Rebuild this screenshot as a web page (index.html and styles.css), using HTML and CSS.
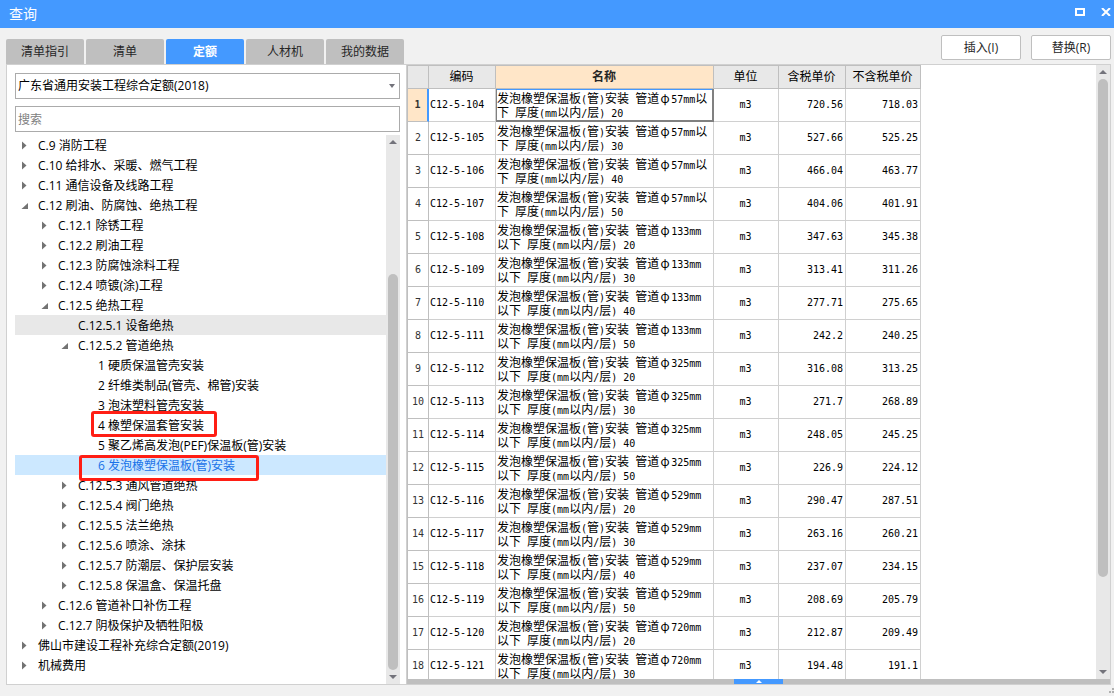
FILE: index.html
```html
<!DOCTYPE html>
<html lang="zh-CN">
<head>
<meta charset="utf-8">
<title>查询</title>
<link rel="stylesheet" href="styles.css">
</head>
<body>
<svg class="defs" aria-hidden="true">
  <symbol id="closed" viewBox="0 0 18 20"><path d="M2 6.5L6.5 10.5L2 14.5Z" fill="#737373"/></symbol>
  <symbol id="open" viewBox="0 0 18 20"><path d="M8 8V14H1.5Z" fill="#737373"/></symbol>
  <symbol id="up" viewBox="0 0 14 14"><path d="M3 9L7 5L11 9Z" fill="#73737b"/></symbol>
  <symbol id="down" viewBox="0 0 14 14"><path d="M3 5H11L7 9Z" fill="#73737b"/></symbol>
</svg>
<header class="titlebar">
  <h1>查询</h1>
  <button type="button" aria-label="最大化"><svg width="10" height="8"><path d="M1 0V8M9 0V8" stroke="#fff" stroke-width="2"/><path d="M0 1H10M0 7H10" stroke="#fff" stroke-width="2"/></svg></button>
  <button type="button" aria-label="关闭"><svg width="10" height="8"><path d="M1 0L9 8M9 0L1 8" stroke="#fff" stroke-width="2"/></svg></button>
</header>
<div class="toolbar">
  <nav class="tabs">
    <button type="button">清单指引</button>
    <button type="button">清单</button>
    <button type="button" class="active">定额</button>
    <button type="button">人材机</button>
    <button type="button">我的数据</button>
  </nav>
  <div class="actions">
    <button type="button">插入(I)</button>
    <button type="button">替换(R)</button>
  </div>
</div>
<main class="content">
  <section class="side">
    <div class="combo">
      <select aria-label="定额库"><option>广东省通用安装工程综合定额(2018)</option></select>
      <svg width="6" height="4"><path d="M0 0H6L3 4Z" fill="#73737b"/></svg>
    </div>
    <input class="search" type="text" placeholder="搜索" aria-label="搜索">
    <div class="treewrap">
      <ul class="tree">
        <li class="l0"><svg><use href="#closed"/></svg>C.9 消防工程</li>
        <li class="l0"><svg><use href="#closed"/></svg>C.10 给排水、采暖、燃气工程</li>
        <li class="l0"><svg><use href="#closed"/></svg>C.11 通信设备及线路工程</li>
        <li class="l0"><svg><use href="#open"/></svg>C.12 刷油、防腐蚀、绝热工程</li>
        <li class="l1"><svg><use href="#closed"/></svg>C.12.1 除锈工程</li>
        <li class="l1"><svg><use href="#closed"/></svg>C.12.2 刷油工程</li>
        <li class="l1"><svg><use href="#closed"/></svg>C.12.3 防腐蚀涂料工程</li>
        <li class="l1"><svg><use href="#closed"/></svg>C.12.4 喷镀(涂)工程</li>
        <li class="l1"><svg><use href="#open"/></svg>C.12.5 绝热工程</li>
        <li class="l2 hover"><svg></svg>C.12.5.1 设备绝热</li>
        <li class="l2"><svg><use href="#open"/></svg>C.12.5.2 管道绝热</li>
        <li class="l3"><svg></svg>1 硬质保温管壳安装</li>
        <li class="l3"><svg></svg>2 纤维类制品(管壳、棉管)安装</li>
        <li class="l3"><svg></svg>3 泡沫塑料管壳安装</li>
        <li class="l3"><svg></svg>4 橡塑保温套管安装<span class="mark mark-a"></span></li>
        <li class="l3"><svg></svg>5 聚乙烯高发泡(PEF)保温板(管)安装</li>
        <li class="l3 selected"><svg></svg>6 发泡橡塑保温板(管)安装<span class="mark mark-b"></span></li>
        <li class="l2"><svg><use href="#closed"/></svg>C.12.5.3 通风管道绝热</li>
        <li class="l2"><svg><use href="#closed"/></svg>C.12.5.4 阀门绝热</li>
        <li class="l2"><svg><use href="#closed"/></svg>C.12.5.5 法兰绝热</li>
        <li class="l2"><svg><use href="#closed"/></svg>C.12.5.6 喷涂、涂抹</li>
        <li class="l2"><svg><use href="#closed"/></svg>C.12.5.7 防潮层、保护层安装</li>
        <li class="l2"><svg><use href="#closed"/></svg>C.12.5.8 保温盒、保温托盘</li>
        <li class="l1"><svg><use href="#closed"/></svg>C.12.6 管道补口补伤工程</li>
        <li class="l1"><svg><use href="#closed"/></svg>C.12.7 阴极保护及牺牲阳极</li>
        <li class="l0"><svg><use href="#closed"/></svg>佛山市建设工程补充综合定额(2019)</li>
        <li class="l0"><svg><use href="#closed"/></svg>机械费用</li>
      </ul>
      <div class="scrollbar side-scroll"><svg><use href="#up"/></svg><div class="track"><div class="thumb"></div></div><svg><use href="#down"/></svg></div>
    </div>
  </section>
  <section class="grid">
    <div class="gridwrap">
      <div class="tablebox">
        <table>
          <colgroup><col class="c-no"><col class="c-code"><col class="c-name"><col class="c-unit"><col class="c-tax"><col class="c-net"></colgroup>
          <thead><tr><th></th><th>编码</th><th class="current">名称</th><th>单位</th><th>含税单价</th><th>不含税单价</th></tr></thead>
          <tbody>
            <tr class="current"><th>1</th><td>C12-5-104</td><td class="name">发泡橡塑保温板<i>(</i>管<i>)</i>安装<i> </i>管道<b>φ</b><i>57mm</i>以下<i> </i>厚度<i>(mm</i>以内<i>/</i>层<i>) 20</i></td><td>m3</td><td>720.56</td><td>718.03</td></tr>
            <tr><th>2</th><td>C12-5-105</td><td class="name">发泡橡塑保温板<i>(</i>管<i>)</i>安装<i> </i>管道<b>φ</b><i>57mm</i>以下<i> </i>厚度<i>(mm</i>以内<i>/</i>层<i>) 30</i></td><td>m3</td><td>527.66</td><td>525.25</td></tr>
            <tr><th>3</th><td>C12-5-106</td><td class="name">发泡橡塑保温板<i>(</i>管<i>)</i>安装<i> </i>管道<b>φ</b><i>57mm</i>以下<i> </i>厚度<i>(mm</i>以内<i>/</i>层<i>) 40</i></td><td>m3</td><td>466.04</td><td>463.77</td></tr>
            <tr><th>4</th><td>C12-5-107</td><td class="name">发泡橡塑保温板<i>(</i>管<i>)</i>安装<i> </i>管道<b>φ</b><i>57mm</i>以下<i> </i>厚度<i>(mm</i>以内<i>/</i>层<i>) 50</i></td><td>m3</td><td>404.06</td><td>401.91</td></tr>
            <tr><th>5</th><td>C12-5-108</td><td class="name">发泡橡塑保温板<i>(</i>管<i>)</i>安装<i> </i>管道<b>φ</b><i>133mm</i>以下<i> </i>厚度<i>(mm</i>以内<i>/</i>层<i>) 20</i></td><td>m3</td><td>347.63</td><td>345.38</td></tr>
            <tr><th>6</th><td>C12-5-109</td><td class="name">发泡橡塑保温板<i>(</i>管<i>)</i>安装<i> </i>管道<b>φ</b><i>133mm</i>以下<i> </i>厚度<i>(mm</i>以内<i>/</i>层<i>) 30</i></td><td>m3</td><td>313.41</td><td>311.26</td></tr>
            <tr><th>7</th><td>C12-5-110</td><td class="name">发泡橡塑保温板<i>(</i>管<i>)</i>安装<i> </i>管道<b>φ</b><i>133mm</i>以下<i> </i>厚度<i>(mm</i>以内<i>/</i>层<i>) 40</i></td><td>m3</td><td>277.71</td><td>275.65</td></tr>
            <tr><th>8</th><td>C12-5-111</td><td class="name">发泡橡塑保温板<i>(</i>管<i>)</i>安装<i> </i>管道<b>φ</b><i>133mm</i>以下<i> </i>厚度<i>(mm</i>以内<i>/</i>层<i>) 50</i></td><td>m3</td><td>242.2</td><td>240.25</td></tr>
            <tr><th>9</th><td>C12-5-112</td><td class="name">发泡橡塑保温板<i>(</i>管<i>)</i>安装<i> </i>管道<b>φ</b><i>325mm</i>以下<i> </i>厚度<i>(mm</i>以内<i>/</i>层<i>) 20</i></td><td>m3</td><td>316.08</td><td>313.25</td></tr>
            <tr><th>10</th><td>C12-5-113</td><td class="name">发泡橡塑保温板<i>(</i>管<i>)</i>安装<i> </i>管道<b>φ</b><i>325mm</i>以下<i> </i>厚度<i>(mm</i>以内<i>/</i>层<i>) 30</i></td><td>m3</td><td>271.7</td><td>268.89</td></tr>
            <tr><th>11</th><td>C12-5-114</td><td class="name">发泡橡塑保温板<i>(</i>管<i>)</i>安装<i> </i>管道<b>φ</b><i>325mm</i>以下<i> </i>厚度<i>(mm</i>以内<i>/</i>层<i>) 40</i></td><td>m3</td><td>248.05</td><td>245.25</td></tr>
            <tr><th>12</th><td>C12-5-115</td><td class="name">发泡橡塑保温板<i>(</i>管<i>)</i>安装<i> </i>管道<b>φ</b><i>325mm</i>以下<i> </i>厚度<i>(mm</i>以内<i>/</i>层<i>) 50</i></td><td>m3</td><td>226.9</td><td>224.12</td></tr>
            <tr><th>13</th><td>C12-5-116</td><td class="name">发泡橡塑保温板<i>(</i>管<i>)</i>安装<i> </i>管道<b>φ</b><i>529mm</i>以下<i> </i>厚度<i>(mm</i>以内<i>/</i>层<i>) 20</i></td><td>m3</td><td>290.47</td><td>287.51</td></tr>
            <tr><th>14</th><td>C12-5-117</td><td class="name">发泡橡塑保温板<i>(</i>管<i>)</i>安装<i> </i>管道<b>φ</b><i>529mm</i>以下<i> </i>厚度<i>(mm</i>以内<i>/</i>层<i>) 30</i></td><td>m3</td><td>263.16</td><td>260.21</td></tr>
            <tr><th>15</th><td>C12-5-118</td><td class="name">发泡橡塑保温板<i>(</i>管<i>)</i>安装<i> </i>管道<b>φ</b><i>529mm</i>以下<i> </i>厚度<i>(mm</i>以内<i>/</i>层<i>) 40</i></td><td>m3</td><td>237.07</td><td>234.15</td></tr>
            <tr><th>16</th><td>C12-5-119</td><td class="name">发泡橡塑保温板<i>(</i>管<i>)</i>安装<i> </i>管道<b>φ</b><i>529mm</i>以下<i> </i>厚度<i>(mm</i>以内<i>/</i>层<i>) 50</i></td><td>m3</td><td>208.69</td><td>205.79</td></tr>
            <tr><th>17</th><td>C12-5-120</td><td class="name">发泡橡塑保温板<i>(</i>管<i>)</i>安装<i> </i>管道<b>φ</b><i>720mm</i>以下<i> </i>厚度<i>(mm</i>以内<i>/</i>层<i>) 20</i></td><td>m3</td><td>212.87</td><td>209.49</td></tr>
            <tr><th>18</th><td>C12-5-121</td><td class="name">发泡橡塑保温板<i>(</i>管<i>)</i>安装<i> </i>管道<b>φ</b><i>720mm</i>以下<i> </i>厚度<i>(mm</i>以内<i>/</i>层<i>) 30</i></td><td>m3</td><td>194.48</td><td>191.1</td></tr>
          </tbody>
        </table>
      </div>
      <div class="scrollbar grid-scroll"><svg><use href="#up"/></svg><div class="track"><div class="thumb"></div></div><svg><use href="#down"/></svg></div>
    </div>
    <div class="splitter"><button type="button" aria-label="展开"><svg width="6" height="3"><path d="M0 3L3 0L6 3Z" fill="#fff"/></svg></button></div>
  </section>
</main>
<footer class="status"><svg width="5" height="5"><path d="M3 0H5V2H3ZM0 3H2V5H0ZM3 3H5V5H3Z" fill="#b0b0b0"/></svg></footer>
</body>
</html>
```
FILE: styles.css
```css
* { box-sizing: border-box; }
body {
  margin: 0;
  height: 100vh;
  display: flex;
  flex-direction: column;
  overflow: hidden;
  background: #f1f1f1;
  color: #000;
  font: 12px/20px "Open Sans", "Noto Sans CJK SC", sans-serif;
}
button, input, select { font: inherit; color: inherit; margin: 0; padding: 0; border: 0; background: none; }
.defs { display: none; }

.titlebar { flex: none; display: flex; align-items: center; gap: 16px; height: 28px; padding: 0 3px 0 9px; background: #4499ff; color: #fff; }
.titlebar h1 { flex: 1; margin: 0; font-size: 14px; font-weight: 400; }
.titlebar button { height: 8px; margin-bottom: 4px; }
.titlebar svg { display: block; }

.toolbar { flex: none; display: flex; justify-content: space-between; height: 36px; padding: 0 3px 0 6px; }
.tabs { display: flex; align-items: flex-end; gap: 2px; }
.tabs button { width: 78px; height: 25px; background: #bfbfbf; color: #262626; border-radius: 2px 2px 0 0; }
.tabs .active { background: #4499ff; color: #fff; font-weight: 700; }
.actions { display: flex; gap: 10px; padding-top: 7px; }
.actions button { width: 80px; height: 25px; border: 1px solid #bfbfbf; border-radius: 2px; background: #fff; color: #262626; }

.content { flex: 1; min-height: 0; display: flex; margin: 0 3px 0 6px; border: 1px solid #d0d0d0; background: #fff; }
.side { flex: none; width: 400px; display: flex; flex-direction: column; padding: 8px 6px 0 8px; border-right: 1px solid #d0d0d0; }
.combo { position: relative; flex: none; height: 26px; margin-bottom: 7px; }
.combo select { appearance: none; width: 100%; height: 26px; padding-left: 2px; border: 1px solid #ababab; border-radius: 0; background: #fff; }
.combo svg { position: absolute; right: 5px; top: 11px; }
.search { flex: none; height: 26px; padding: 0 2px; border: 1px solid #ababab; }
.search::placeholder { color: #808080; opacity: 1; }
.treewrap { flex: 1; min-height: 0; display: flex; margin-top: 3px; }
.tree { flex: 1; margin: 0; padding: 0; list-style: none; overflow: hidden; }
.tree li { position: relative; display: flex; height: 20px; line-height: 21px; white-space: pre; }
.tree svg { flex: none; width: 18px; height: 20px; }
.l0 { padding-left: 5px; }
.l1 { padding-left: 25px; }
.l2 { padding-left: 45px; }
.l3 { padding-left: 65px; }
.hover { background: #e8e8e8; }
.selected { background: #cce8ff; color: #1a73e8; }
.mark { position: absolute; z-index: 1; border: 3px solid #ff1e14; border-radius: 3px; }
.mark-a { left: 76px; top: -4px; width: 126px; height: 26px; }
.mark-b { left: 64px; top: 0; width: 180px; height: 26px; }

.scrollbar { flex: none; display: flex; flex-direction: column; width: 14px; background: #e8e8e8; }
.scrollbar svg { flex: none; width: 14px; height: 14px; }
.track { flex: 1; display: flex; flex-direction: column; padding: 0 2px; }
.thumb { border-radius: 5px; background: #bfbfbf; }
.side-scroll .track { justify-content: flex-end; }
.side-scroll .thumb { height: 76%; }
.grid-scroll .thumb { height: 85%; }

.grid { flex: 1; min-width: 0; display: flex; flex-direction: column; }
.gridwrap { flex: 1; min-height: 0; display: flex; }
.tablebox { flex: 1; min-width: 0; overflow: hidden; }
table { width: 514px; table-layout: fixed; border-collapse: separate; border-spacing: 0; line-height: 14px; }
.c-no { width: 22px; }
.c-code { width: 67px; }
.c-name { width: 218px; }
.c-unit { width: 65px; }
.c-tax { width: 67px; }
.c-net { width: 75px; }
th, td { padding: 0 2px 0 1px; border: solid #d0d0d0; border-width: 0 1px 1px 0; }
thead th { height: 24px; border-color: #bfbfbf; border-top-width: 1px; background: #e8e8e8; font-weight: 400; }
thead th.current { background: #ffe6c8; color: #262626; font-weight: 700; }
th:first-child { border-left: 1px solid #bfbfbf; }
tbody th { padding: 0; border-color: #bfbfbf; background: #fff; color: #333; font-weight: 400; }
tbody th, td { height: 33px; font-family: "DejaVu Sans Mono", "Noto Sans CJK SC", monospace; font-size: 10px; }
td.name { font-family: "Noto Sans CJK SC", sans-serif; font-size: 12px; }
.name i { font: 10px/0 "DejaVu Sans Mono", monospace; }
.name b { display: inline-block; width: 12px; text-align: center; font-weight: 400; }
td:nth-child(4) { text-align: center; }
td:nth-child(n+5) { text-align: right; }
tr.current th { background: #ffe6c8; border-right: 2px solid #4499ff; font-weight: 700; }
tr.current .name { border-color: #808080; box-shadow: inset 1px 0 #808080, inset -1px -1px #808080, inset 0 1px #4499ff; }

.splitter { flex: none; display: flex; justify-content: center; height: 5px; background: #bfbfbf; }
.splitter button { display: flex; align-items: center; justify-content: center; width: 49px; height: 5px; background: #4499ff; }
.status { flex: none; display: flex; justify-content: flex-end; height: 11px; padding-top: 3px; }
```
